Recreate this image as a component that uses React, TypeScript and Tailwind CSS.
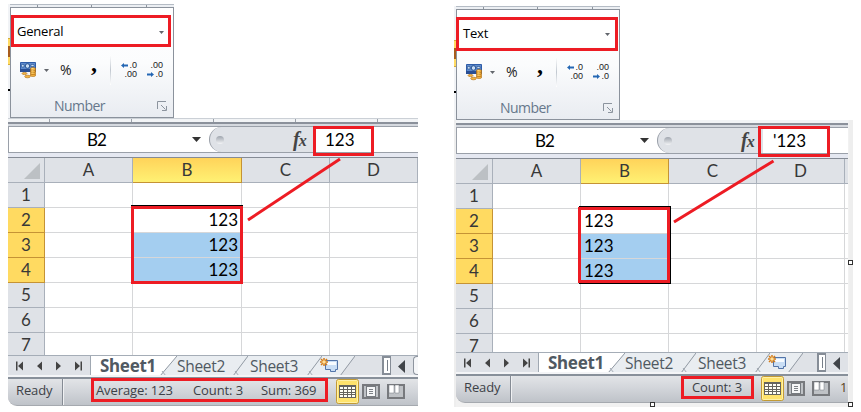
import React from "react";

const SEGOE = "font-['Open_Sans','Noto_Sans',sans-serif]";
const CALIBRI = "font-['Lato',sans-serif]";

function CurrencyIcon() {
  return (
    <svg width="18" height="18" viewBox="0 0 18 18" className="shrink-0">
      <rect x="0" y="1" width="16" height="10" rx="0.8" fill="#2f5da8" />
      <path d="M1 2h14v7h-14z" fill="#5f8bcc" />
      <path d="M0 8h16v3h-16z" fill="#2a4f94" />
      <circle cx="7.5" cy="5" r="2.3" fill="#c9dcf3" stroke="#24508f" />
      <path d="M1.5 3.5h2.500v2.500h-2.500zM11 3.500h3v2h-3z" fill="#c9dcf3" stroke="#24508f" strokeWidth="0.6" />
      <g fill="#f4b440" stroke="#a8660f" strokeWidth="0.6">
        <ellipse cx="4.500" cy="12.500" rx="2.500" ry="1.100" />
        <ellipse cx="7.500" cy="15.500" rx="2.800" ry="1.300" />
        <ellipse cx="13" cy="14" rx="2.800" ry="1.500" />
        <ellipse cx="13" cy="12" rx="2.800" ry="1.500" />
        <ellipse cx="13" cy="10" rx="2.800" ry="1.500" />
        <ellipse cx="13" cy="8" rx="2.800" ry="1.500" />
      </g>
      <path d="M11.500 7.600h2M11.500 9.800h2M11.500 12h2" stroke="#ffe79b" strokeWidth="0.8" />
    </svg>
  );
}

function DownArrow({ big = false }: { big?: boolean }) {
  return big ? (
    <svg width="9" height="5" className="shrink-0"><path d="M0 0h9L4.500 5z" fill="#333" /></svg>
  ) : (
    <svg width="5" height="3" className="shrink-0"><path d="M0 0h5L2.500 3z" fill="#62666c" /></svg>
  );
}

function DecimalIcon({ increase }: { increase: boolean }) {
  return (
    <div className="flex h-[18px] w-[16px] shrink-0 flex-col font-['Liberation_Sans',sans-serif] text-[9px] leading-[9px] text-[#1c1c1c]">
      <div className="flex h-[9px] items-center justify-end">
        {increase && <svg width="7" height="5" className="mr-auto"><path d="M0 2.500L3 0v1.500h4v2H3V5z" fill="#2467b4" /></svg>}
        <span>{increase ? ".0" : ".00"}</span>
      </div>
      <div className="flex h-[9px] items-center justify-end">
        {!increase && <svg width="7" height="5" className="mr-auto"><path d="M7 2.500L4 0v1.500H0v2h4V5z" fill="#2467b4" /></svg>}
        <span>{increase ? ".00" : ".0"}</span>
      </div>
    </div>
  );
}

function NumberGroup({ format }: { format: string }) {
  return (
    <div className="flex w-[166px] h-[114px]">
      <div className="w-[2px] shrink-0 pt-[34px] bg-[#f1f3f6]">
        <div className="h-[27px] border-y border-[#d4ad3d] bg-[#ffdb63] py-[7px]">
          <div className="h-[11px] bg-[#a85c1c]" />
        </div>
        <div className="mt-[24px] h-[2px] bg-black" />
      </div>
      <div className="flex w-[164px] flex-col">
        <div className="flex h-[3px] justify-around border-t border-[#b5bcc5] bg-[#eceff3]">
          <i className="w-px bg-[#8c939d]" /><i className="w-px bg-[#8c939d]" /><i className="w-px bg-[#8c939d]" />
        </div>
        <div className="h-[111px] border border-[#8b929c] bg-gradient-to-b from-[#fff] via-[#fbfcfd] to-[#e9ecf1]">
          <div className={`ml-[3px] mt-[11px] flex h-[26px] w-[154px] items-center justify-between bg-white pl-[3px] pr-[4px] text-[13px] leading-[26px] tracking-[-0.2px] text-black ${SEGOE}`}>
            <span className="mt-[-2px]">{format}</span>
            <DownArrow />
          </div>
          <div className={`flex h-[46px] items-center pl-[9px] pt-[4px] text-[#222] ${SEGOE}`}>
            <CurrencyIcon />
            <span className="ml-[6px]"><DownArrow /></span>
            <span className="ml-[11px] w-[13px] text-[14px] leading-[20px]">%</span>
            <span className="ml-[18px] mt-[-14px] w-[7px] font-['Liberation_Serif',serif] text-[24px] font-bold leading-[20px] text-black">,</span>
            <i className="ml-[12px] h-[30px] w-px bg-gradient-to-b from-white via-[#c1c8d0] to-white" />
            <span className="ml-[10px]"><DecimalIcon increase /></span>
            <span className="ml-[10px]"><DecimalIcon increase={false} /></span>
          </div>
          <div className={`flex h-[24px] items-center pl-[43px] pt-[6px] text-[14px] leading-[18px] tracking-[-0.55px] text-[#66778b] ${SEGOE}`}>
            <span className="w-[103px]">Number</span>
            <svg width="10" height="10" fill="none" stroke="#8c949e"><path d="M.5 8V.5H9M4 4l4.500 4.500M9.500 5v4.500H5" /></svg>
          </div>
        </div>
      </div>
    </div>
  );
}

function FormulaBar({ value, valueClass }: { value: string; valueClass: string }) {
  return (
    <div className="shrink-0">
      <div className="h-[4px] border-t-2 border-[#8b919b] bg-[#d5d9df]" />
      <div className={`flex h-[27px] border-y border-l border-[#9aa0a9] bg-white leading-[25px] text-black ${CALIBRI}`}>
        <span className="w-[174px] pl-[78px] text-[17px] leading-[26px] tracking-[-0.9px]">B2</span>
        <span className="flex w-[26px] items-center pl-[9px]"><DownArrow big /></span>
        <div className="flex w-[106px] items-center rounded-l-[13px] border-l border-[#989ea7] bg-[#dfe2e7]">
          <i className="ml-[6px] h-[8px] w-[8px] rounded-full bg-gradient-to-b from-[#9fa5ae] to-[#f4f5f7]" />
          <span className="ml-[69px] font-['Liberation_Serif',serif] text-[20px] font-bold italic leading-[25px] text-[#444]">f<span className="ml-[-1px] text-[16px]">x</span></span>
        </div>
        <span className={`text-[17px] ${valueClass}`}>{value}</span>
      </div>
      <div className="h-[5px] border-b border-[#858b95] bg-[#e5e8f1]" />
    </div>
  );
}

type SheetProps = {
  cell: string;
  numeric: boolean;
  bWidth: string;
  gridClass: string;
};

function Grid({ cell, numeric, bWidth, gridClass }: SheetProps) {
  const head = "box-border shrink-0 border-r border-b border-[#a9b0ba] bg-[#dfe2e7] text-center text-[#383838]";
  return (
    <div className={`flex shrink-0 flex-col overflow-hidden bg-white text-[17px] leading-[24px] ${CALIBRI} ${gridClass}`}>
      <div className="flex h-[25px] shrink-0">
        <div className={`flex w-[37px] items-end justify-end pb-[3px] pr-[4px] ${head}`}>
          <svg width="16" height="16"><path d="M16 0v16H0z" fill="#bcc0c4" /></svg>
        </div>
        <div className={`w-[88px] ${head}`}>A</div>
        <div className={`shrink-0 border-b border-r border-[#c59335] bg-gradient-to-b from-[#ffd35a] to-[#fff173] text-center text-[#383838] ${bWidth}`}>B</div>
        <div className={`w-[88px] ${head}`}>C</div>
        <div className={`w-[88px] ${head}`}>D</div>
        <div className="grow border-b border-[#a9b0ba] bg-[#dfe2e7]" />
      </div>
      {[1, 2, 3, 4, 5, 6, 7].map((n) => {
        const selected = n >= 2 && n <= 4;
        const line = "border-r border-b border-[#d6d7d9]";
        return (
          <div key={n} className="flex h-[25px] shrink-0">
            <div className={selected ? "w-[37px] shrink-0 border-b border-r border-[#c59335] bg-[#ffda61] text-center text-[#383838]" : `w-[37px] ${head}`}>{n}</div>
            <div className={`w-[88px] shrink-0 ${line}`} />
            <div className={`shrink-0 ${line} ${bWidth} ${n === 3 || n === 4 ? "bg-[#a4cef0]" : ""} ${numeric ? "pr-[3px] text-right" : "pl-[3px]"} text-black`}>
              {selected ? cell : ""}
            </div>
            <div className={`w-[88px] shrink-0 ${line}`} />
            <div className={`w-[88px] shrink-0 ${line}`} />
            <div className="grow border-b border-[#d6d7d9]" />
          </div>
        );
      })}
    </div>
  );
}

function Slope({ wide = false, active = false, last = false }: { wide?: boolean; active?: boolean; last?: boolean }) {
  const w = wide ? 17 : 15;
  return (
    <svg width={w} height="20" className="shrink-0">
      <path d={`M0 0H${w}L0 20z`} fill={active ? "#fff" : "#e9edf1"} />
      <path d={`M${w} 0L0 20H${w}z`} fill={last ? "#dfe2e7" : "#e9edf1"} />
      <path d={`M${w} 0L0 20`} stroke="#9199a3" fill="none" />
      {!last && <path d="M2 15l4 5" stroke="#a4abb4" fill="none" />}
    </svg>
  );
}

function SheetTabs({ gap }: { gap: string }) {
  return (
    <div className={`flex h-[22px] shrink-0 overflow-hidden border-b-2 border-t border-b-[#f4f5f7] border-t-[#a5adb7] bg-[#dfe2e7] text-[15.500px] leading-[20px] tracking-[-0.300px] text-[#505962] ${SEGOE}`}>
      <svg width="82" height="20" fill="#444" className="shrink-0">
        <path d="M8 5.500h1.500v9H8zM15 5.500v9l-5-4.500zM34 5.500v9L29 10zM48 5.500v9l5-4.500zM67 5.500v9l5-4.500zM72.500 5.500H74v9h-1.500z" />
      </svg>
      <div className="w-px shrink-0 bg-[#a0a8b2]" />
      <span className="w-[69px] shrink-0 bg-white pl-[9px] font-['Noto_Sans',sans-serif] text-[17px] font-bold tracking-[-0.300px]">Sheet1</span>
      <Slope wide active />
      <span className="w-[56px] shrink-0 bg-[#e9edf1]">Sheet2</span>
      <Slope />
      <span className="w-[59px] shrink-0 bg-[#e9edf1] pl-[2px]">Sheet3</span>
      <Slope />
      <svg width="18" height="20" className="shrink-0 overflow-visible bg-[#e9edf1]">
        <path d="M3.500 4.500h12v9h-2v2h-5v-2h-5z" fill="#c9def5" stroke="#5374a8" />
        <path d="M5 6h9v3H5z" fill="#f7fbff" />
        <path d="M2 2v8M-2 6h8M-1 3l6 6M5 3l-6 6" stroke="#d47b16" strokeWidth="1.500" />
        <circle cx="2" cy="6" r="1.800" fill="#ffe09a" />
      </svg>
      <Slope last />
      <div className={`shrink-0 ${gap}`} />
      <div className="w-[9px] shrink-0 border-2 border-r border-[#868d97] bg-white py-[2px]"><div className="h-full w-[4px] border-r border-[#777f89]" /></div>
      <svg width="22" height="20" className="shrink-0"><path d="M14 4v13l-7-6.500z" fill="#404449" /></svg>
      <div className="grow rounded-l-sm border border-r-0 border-[#8e959f] bg-[#f6f7f9]" />
    </div>
  );
}

type StatusProps = { items: [string, string][]; itemsClass: string; lineClass: string; tail?: string };

function StatusBar({ items, itemsClass, lineClass, tail }: StatusProps) {
  return (
    <div className="h-[29px] shrink-0">
      <div className="h-[2px] bg-[#88909a]" />
      <div className={`flex h-[27px] overflow-hidden rounded-bl-[9px] border-b border-[#a5a9af] bg-gradient-to-b from-[#e2e4e7] via-[#d1d4d9] to-[#bfc3c9] text-[13px] tracking-[-0.1px] text-[#3c4147] ${lineClass} ${SEGOE}`}>
        <span className="w-[54px] shrink-0 pl-[8px]">Ready</span>
        <i className="w-[2px] shrink-0 border-l border-[#858b94] bg-[#f0f1f3]" />
        <div className={`flex shrink-0 ${itemsClass}`}>
          {items.map(([label, w]) => <span key={label} className={`shrink-0 whitespace-nowrap ${w}`}>{label}</span>)}
        </div>
        <svg width="74" height="26" className="shrink-0" fill="none">
          <rect x="1.500" y=".5" width="22" height="24" rx="2" fill="#ffe36c" stroke="#c29a35" />
          <rect x="2.500" y="1.500" width="20" height="22" rx="1" stroke="#fff1a8" />
          <rect x="4" y="6" width="17" height="13" fill="#64635d" />
          <path d="M5 8h3v2H5zM9 8h3v2H9zM13 8h3v2h-3zM17 8h3v2h-3zM5 11h3v2H5zM9 11h3v2H9zM13 11h3v2h-3zM17 11h3v2h-3zM5 14h3v1H5zM9 14h3v1H9zM13 14h3v1h-3zM17 14h3v1h-3zM5 16h3v2H5zM9 16h3v2H9zM13 16h3v2h-3zM17 16h3v2h-3z" fill="#fffef5" />
          <rect x="28" y="6" width="16" height="13" fill="#bfc2c6" stroke="#77797d" strokeWidth="2" />
          <rect x="31.500" y="7.500" width="9" height="10" fill="#f5f6f7" stroke="#777b80" />
          <path d="M34 10.500h4M34 12.500h4M34 14.500h4" stroke="#7e8287" />
          <rect x="53" y="6" width="16" height="13" fill="#bfc2c6" stroke="#77797d" strokeWidth="2" />
          <path d="M54 6h5v8h-5zM60 6h4v8h-4z" fill="#fff" stroke="#777b80" strokeWidth="0.5" />
        </svg>
        {tail && <span className="ml-[6px] text-[#5a4320]">{tail}</span>}
      </div>
    </div>
  );
}

function Handle({ className }: { className: string }) {
  return <div className={`absolute h-[5px] w-[5px] border border-[#333] bg-white ${className}`} />;
}

export default function App() {
  const mark = "absolute border-3 border-[#ed1c24]";
  return (
    <main className="relative flex h-[412px] w-[861px] overflow-hidden bg-white">
      <section className="ml-[8px] flex w-[410px] shrink-0 flex-col pt-[4px]">
        <NumberGroup format="General" />
        <div className="flex h-[4px] justify-around border-t border-[#cbd0d6] bg-[#f2f4f6]">
          <i className="w-px bg-[#9ba1aa]" /><i className="w-px bg-[#9ba1aa]" /><i className="w-px bg-[#9ba1aa]" /><i className="w-px bg-[#9ba1aa]" /><i className="w-px bg-[#9ba1aa]" />
        </div>
        <FormulaBar value="123" valueClass="pl-[10px]" />
        <Grid cell="123" numeric bWidth="w-[109px]" gridClass="h-[197px]" />
        <SheetTabs gap="w-[27px]" />
        <StatusBar
          items={[["Average: 123", "w-[97px]"], ["Count: 3", "w-[68px]"], ["Sum: 369", "w-[71px]"]]}
          itemsClass="w-[271px] pl-[32px]"
          lineClass="leading-[23px]"
        />
      </section>

      <section className="ml-[36px] flex w-[399px] shrink-0 flex-col pt-[6px]">
        <NumberGroup format="Text" />
        <div className="h-[287px] w-[399px] border-x-2 border-r-[4px] border-[#eeeeee] bg-[#f1f1f1]">
          <div className="flex w-[392px] flex-col">
            <div className="h-[3px] bg-[#f2f4f6]" />
            <FormulaBar value="'123" valueClass="pl-[10px]" />
            <Grid cell="123" numeric={false} bWidth="w-[88px]" gridClass="h-[193px]" />
            <SheetTabs gap="w-[14px]" />
            <StatusBar items={[["Count: 3", "w-[69px]"]]} itemsClass="w-[248px] pl-[180px]" lineClass="leading-[22px]" tail="1" />
          </div>
        </div>
      </section>

      <div className="absolute left-[131px] top-[205px] h-[79px] w-[112px] border border-black" />
      <div className="absolute left-[579px] top-[206px] h-[78px] w-[92px] border border-black" />
      <div className={`${mark} left-[11px] top-[15px] h-[32px] w-[160px]`} />
      <div className={`${mark} left-[313px] top-[126px] h-[30px] w-[61px]`} />
      <div className={`${mark} left-[131px] top-[206px] h-[78px] w-[112px]`} />
      <div className={`${mark} left-[91px] top-[378px] h-[24px] w-[237px]`} />
      <div className={`${mark} left-[456px] top-[17px] h-[34px] w-[162px]`} />
      <div className={`${mark} left-[758px] top-[126px] h-[31px] w-[72px]`} />
      <div className={`${mark} left-[578px] top-[207px] h-[76px] w-[92px]`} />
      <div className={`${mark} left-[681px] top-[376px] h-[23px] w-[73px]`} />
      <svg className="absolute inset-0" width="861" height="412" stroke="#ed1c24" strokeWidth="3">
        <path d="M340 159L248 220M773.500 161L674 222" />
      </svg>
      <Handle className="left-[848px] top-[260px]" />
      <Handle className="left-[650px] top-[402px]" />
      <Handle className="left-[848px] top-[402px]" />
    </main>
  );
}
